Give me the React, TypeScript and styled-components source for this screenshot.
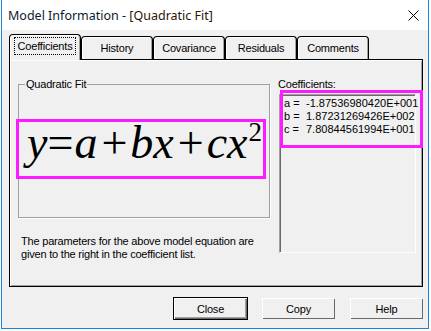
import styled, { createGlobalStyle } from 'styled-components'

const GlobalStyle = createGlobalStyle`
  html, body {
    margin: 0;
    padding: 0;
    background: #ffffff;
  }
  body {
    width: 431px;
    height: 331px;
    overflow: hidden;
  }
`

const uiFont = `"Liberation Sans", Arial, sans-serif`

const Window = styled.div`
  box-sizing: border-box;
  margin-left: 1px;
  width: 428px;
  height: 329px;
  display: flex;
  flex-direction: column;
  border: 1px solid #1883d7;
  border-top: none;
  background: #f0f0f0;
`

const TitleBar = styled.div`
  height: 30px;
  flex: none;
  display: flex;
  align-items: center;
  justify-content: space-between;
  background: #ffffff;
  padding: 0 0 0 6px;
  font-family: "Noto Sans", "Open Sans", sans-serif;
  font-size: 12.5px;
  color: #000;

  .name {
    color: #0c1a2e;
  }
  .fit {
    color: #2a1606;
  }
`

const CloseX = styled.button`
  width: 30px;
  height: 30px;
  border: none;
  background: none;
  display: flex;
  align-items: center;
  justify-content: center;
  padding: 0;
`

const Body = styled.div`
  flex: 1;
  display: flex;
  flex-direction: column;
  padding: 4px 4px 0 7px;
  font-family: ${uiFont};
  font-size: 11px;
  letter-spacing: -0.2px;
  color: #000;
`

const TabRow = styled.div`
  display: flex;
  align-items: flex-end;
  height: 25px;
  position: relative;
  z-index: 1;
`

const Tab = styled.div<{ $active?: boolean }>`
  box-sizing: border-box;
  width: 72px;
  height: ${(p) => (p.$active ? '26px' : '23px')};
  margin-bottom: ${(p) => (p.$active ? '-1px' : '0')};
  display: flex;
  align-items: center;
  justify-content: center;
  border: 1px solid #000;
  border-bottom: none;
  border-radius: 4px 4px 0 0;
  background: #f0f0f0;
  box-shadow: inset 1px 1px #ffffff, inset -1px 0 #a0a0a0;
  font-size: 11px;
  padding-bottom: ${(p) => (p.$active ? '3px' : '0')};

  span {
    padding: 2px 3px;
    outline: ${(p) => (p.$active ? '1px dotted #000' : 'none')};
  }
`

const Panel = styled.div`
  box-sizing: border-box;
  width: 414px;
  height: 228px;
  border: 1px solid #000;
  box-shadow: inset 1px 1px #ffffff, inset -1px -1px #a0a0a0;
  display: grid;
  grid-template-columns: 252px 138px;
  column-gap: 8px;
  padding: 18px 6px 0 8px;
`

const LeftCol = styled.div`
  display: flex;
  flex-direction: column;
`

const GroupBox = styled.fieldset`
  box-sizing: border-box;
  margin: 0;
  height: 140px;
  padding: 29px 0 0 0;
  border: 1px solid #a0a0a0;
  box-shadow: 1px 1px #ffffff;
`

const Legend = styled.legend`
  font-size: 11px;
  padding: 0 1px;
  margin-left: 6px;
  line-height: 12px;
`

const EquationMark = styled.div`
  box-sizing: border-box;
  margin-left: -3px;
  width: 250px;
  height: 60px;
  border: 3px solid #ff19ff;
  padding: 0 0 0 8px;
  display: flex;
  align-items: flex-end;
  font-family: "Liberation Serif", "Times New Roman", serif;
  font-size: 46px;
  letter-spacing: 0;
  line-height: 1;
  white-space: nowrap;
  overflow: visible;
`

const EquationLine = styled.div`
  padding-bottom: 10px;
`

const Var = styled.i`
  font-style: italic;
`

const Op = styled.span<{ $wide?: boolean }>`
  font-style: normal;
  margin: ${(p) => (p.$wide ? '0 3px 0 4px' : '0 1px 0 0')};
`

const Power = styled.sup`
  font-size: 27px;
  font-style: normal;
  vertical-align: 0.62em;
  line-height: 0;
  margin-left: 1px;
`

const Description = styled.p`
  margin: 17px 0 0 3px;
  line-height: 13px;
  white-space: nowrap;
`

const RightCol = styled.div`
  display: flex;
  flex-direction: column;
  position: relative;
`

const ListLabel = styled.div`
  line-height: 14px;
  margin-top: -1px;
  margin-bottom: 3px;
`

const ListBox = styled.div`
  box-sizing: border-box;
  margin-left: 1px;
  width: 137px;
  height: 159px;
  border: 1px solid;
  border-color: #a0a0a0 #ffffff #ffffff #a0a0a0;
  box-shadow: inset 1px 1px #696969;
  padding: 2px 0 0 4px;
  letter-spacing: 0;
  line-height: 13px;
`

const Row = styled.div`
  display: flex;
  white-space: nowrap;
`

const Key = styled.span`
  flex: none;
  width: 22px;
`

const HighlightMark = styled.div`
  position: absolute;
  left: 2px;
  top: 12px;
  width: 143px;
  height: 58px;
  box-sizing: border-box;
  border: 3px solid #ff19ff;
  pointer-events: none;
`

const ButtonRow = styled.div`
  display: flex;
  justify-content: flex-end;
  gap: 13px;
  padding: 10px 0 0 0;
`

const Button = styled.button<{ $default?: boolean }>`
  box-sizing: border-box;
  width: 75px;
  height: 23px;
  font-family: ${uiFont};
  font-size: 11px;
  letter-spacing: -0.2px;
  color: #000;
  background: #f0f0f0;
  border: 1px solid ${(p) => (p.$default ? '#000' : '#f0f0f0')};
  box-shadow: ${(p) =>
    p.$default
      ? 'inset 1px 1px #ffffff, inset -1px -1px #696969, inset -2px -2px #a0a0a0'
      : 'inset 1px 1px #ffffff, inset -1px -1px #696969'};
  padding: 0;
`

const coefficients = [
  { key: 'a =', value: '-1.87536980420E+001' },
  { key: 'b =', value: '1.87231269426E+002' },
  { key: 'c =', value: '7.80844561994E+001' },
]

const tabs = ['Coefficients', 'History', 'Covariance', 'Residuals', 'Comments']

export default function App() {
  return (
    <>
      <GlobalStyle />
      <Window>
        <TitleBar>
          <span>
            <span className="name">Model Information - </span>
            <span className="fit">[Quadratic Fit]</span>
          </span>
          <CloseX aria-label="Close">
            <svg width="11" height="11" viewBox="0 0 11 11">
              <path d="M0.5 0.5 L10.5 10.5 M10.5 0.5 L0.5 10.5" stroke="#000" strokeWidth="1" />
            </svg>
          </CloseX>
        </TitleBar>
        <Body>
          <TabRow>
            {tabs.map((t, i) => (
              <Tab key={t} $active={i === 0}>
                <span>{t}</span>
              </Tab>
            ))}
          </TabRow>
          <Panel>
            <LeftCol>
              <GroupBox>
                <Legend>Quadratic Fit</Legend>
                <EquationMark>
                  <EquationLine>
                    <Var>y</Var>
                    <Op>=</Op>
                    <Var>a</Var>
                    <Op $wide>+</Op>
                    <Var>bx</Var>
                    <Op $wide>+</Op>
                    <Var>cx</Var>
                    <Power>2</Power>
                  </EquationLine>
                </EquationMark>
              </GroupBox>
              <Description>
                The parameters for the above model equation are
                <br />
                given to the right in the coefficient list.
              </Description>
            </LeftCol>
            <RightCol>
              <ListLabel>Coefficients:</ListLabel>
              <ListBox>
                {coefficients.map((c) => (
                  <Row key={c.key}>
                    <Key>{c.key}</Key>
                    <span>{c.value}</span>
                  </Row>
                ))}
              </ListBox>
              <HighlightMark />
            </RightCol>
          </Panel>
          <ButtonRow>
            <Button $default>Close</Button>
            <Button>Copy</Button>
            <Button>Help</Button>
          </ButtonRow>
        </Body>
      </Window>
    </>
  )
}
